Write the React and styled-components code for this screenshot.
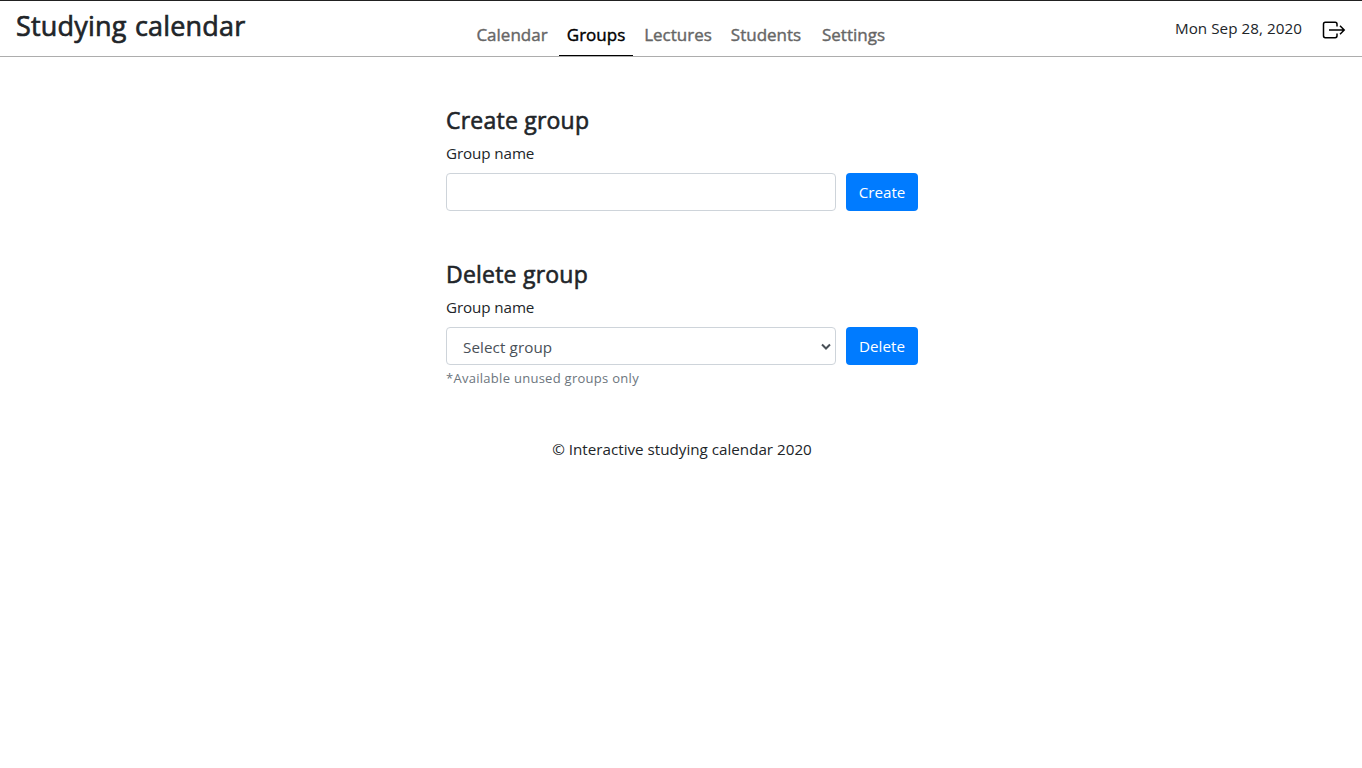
import React from "react";
import styled, { createGlobalStyle } from "styled-components";

const GlobalStyle = createGlobalStyle`
  *, *::before, *::after { box-sizing: border-box; }
  body {
    margin: 0;
    background: #fff;
    color: #212529;
    font-family: "Segoe UI", "Open Sans", "Noto Sans", sans-serif;
    font-size: 15.2px;
    line-height: 24px;
  }
`;

const Header = styled.header`
  display: grid;
  grid-template-columns: 1fr auto 1fr;
  height: 57px;
  padding: 0 16px;
  border-top: 1px solid #212121;
  border-bottom: 1px solid #adadad;
`;

const Brand = styled.h1`
  margin: 8px 0 0;
  font-size: 27px;
  font-weight: 400;
  -webkit-text-stroke: 0.65px currentColor;
  line-height: 34px;
  letter-spacing: 0.2px;
  word-spacing: 1px;
  white-space: nowrap;
`;

const Nav = styled.nav`
  display: flex;
  gap: 4px;
  align-items: flex-end;
`;

const NavLink = styled.a`
  width: ${(p) => p.$width}px;
  height: 41px;
  padding: 8px 0 0 1px;
  text-align: center;
  font-size: 17px;
  font-weight: 400;
  -webkit-text-stroke: 0.4px currentColor;
  white-space: nowrap;
  text-decoration: none;
  color: ${(p) => (p.$active ? "#000" : "#666")};
  border-bottom: 1px solid ${(p) => (p.$active ? "#000" : "transparent")};
`;

const Account = styled.div`
  display: flex;
  justify-content: flex-end;
  align-items: flex-start;
  gap: 20px;
  padding-top: 15px;
`;

const CurrentDate = styled.span`
  letter-spacing: 0.06px;
`;

const LogoutButton = styled.button`
  display: flex;
  margin: 5px 0 0;
  padding: 0;
  border: 0;
  background: none;
  color: #000;
`;

const Main = styled.main`
  width: 472px;
  margin: 49px 0 0 446px;
`;

const Section = styled.section`
  margin-bottom: 49px;
`;

const Title = styled.h2`
  margin: 0 0 6px;
  font-size: 23px;
  font-weight: 400;
  -webkit-text-stroke: 0.6px currentColor;
  line-height: 29px;
  letter-spacing: 0.22px;
`;

const Label = styled.label`
  display: block;
  margin-bottom: 8px;
  letter-spacing: -0.1px;
`;

const Row = styled.div`
  display: flex;
  gap: 10px;
`;

const Input = styled.input`
  width: 390px;
  height: 38px;
  padding: 6px 12px;
  border: 1px solid #ced4da;
  border-radius: 4px;
  background: #fff;
  font: inherit;
`;

const Select = styled.button`
  display: flex;
  justify-content: space-between;
  align-items: center;
  width: 390px;
  height: 38px;
  padding: 2px 4px 0 16px;
  border: 1px solid #ced4da;
  border-radius: 4px;
  background: #fff;
  color: #495057;
  font: inherit;
  letter-spacing: 0.1px;
`;

const Button = styled.button`
  width: 72px;
  height: 38px;
  padding: 0;
  border: 0;
  border-radius: 4px;
  background: #007bff;
  color: #fff;
  font: inherit;
`;

const Hint = styled.small`
  display: block;
  margin-top: 3px;
  font-size: 13px;
  line-height: 20px;
  letter-spacing: 0.28px;
  color: #6c757d;
`;

const Footer = styled.footer`
  text-align: center;
`;

const LINKS = [
  { name: "Calendar", width: 86 },
  { name: "Groups", width: 74, active: true },
  { name: "Lectures", width: 82 },
  { name: "Students", width: 86 },
  { name: "Settings", width: 81 },
];

export default function App() {
  return (
    <>
      <GlobalStyle />
      <Header>
        <Brand>Studying calendar</Brand>
        <Nav>
          {LINKS.map((l) => (
            <NavLink key={l.name} $width={l.width} $active={l.active}>
              {l.name}
            </NavLink>
          ))}
        </Nav>
        <Account>
          <CurrentDate>Mon Sep 28, 2020</CurrentDate>
          <LogoutButton aria-label="Log out">
            <svg width="24" height="18" viewBox="0 0 24 18" fill="none" stroke="currentColor" strokeWidth="1.5">
              <path d="M15 5.5V3.2Q15 1.3 13.2 1.3H3.3Q1.5 1.3 1.5 3.2V14.8Q1.5 16.7 3.3 16.7H13.2Q15 16.7 15 14.8V12.5" />
              <path d="M7 9H22M18 4.8L22.2 9L18 13.2" />
            </svg>
          </LogoutButton>
        </Account>
      </Header>
      <Main>
        <Section>
          <Title>Create group</Title>
          <Label htmlFor="group-name">Group name</Label>
          <Row>
            <Input id="group-name" />
            <Button>Create</Button>
          </Row>
        </Section>
        <Section>
          <Title>Delete group</Title>
          <Label>Group name</Label>
          <Row>
            <Select>
              <span>Select group</span>
              <svg width="10" height="8" viewBox="0 0 10 8" fill="none" stroke="#495057" strokeWidth="2">
                <path d="M1 1.5L5 5.5L9 1.5" />
              </svg>
            </Select>
            <Button>Delete</Button>
          </Row>
          <Hint>*Available unused groups only</Hint>
        </Section>
        <Footer>© Interactive studying calendar 2020</Footer>
      </Main>
    </>
  );
}
